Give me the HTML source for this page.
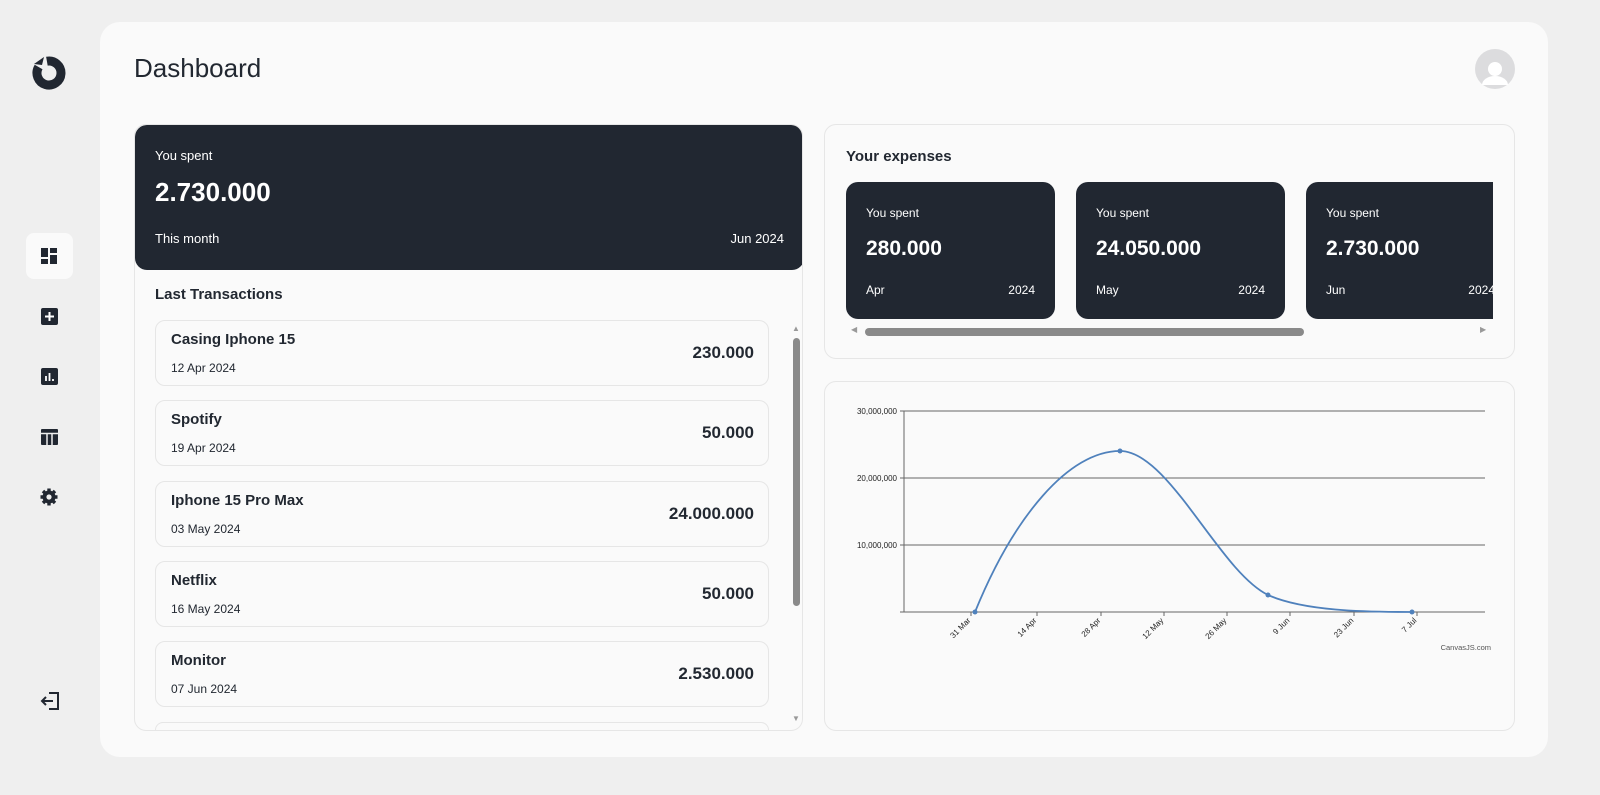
<!DOCTYPE html>
<html><head><style>
*{box-sizing:border-box;margin:0;padding:0}
body{width:1600px;height:795px;background:#efefef;font-family:"Liberation Sans",sans-serif;color:#222831;position:relative;overflow:hidden}
.abs{position:absolute}
.main{left:100px;top:22px;width:1448px;height:735px;background:#fafafa;border-radius:20px}
.card{border:1px solid #e6e6e6;border-radius:12px;background:#fafafa}
.dark{background:#212731;color:#fff}
.item{left:155px;width:614px;height:66px;border:1px solid #e6e6e6;border-radius:10px;background:#fafafa}
.item .n{position:absolute;left:15px;top:10px;font-size:15px;font-weight:bold}
.item .d{position:absolute;left:15px;top:40px;font-size:12px}
.item .v{position:absolute;right:14px;top:22px;font-size:17px;font-weight:bold}
.mini{top:182px;width:209px;height:137px;border-radius:12px;background:#212731;color:#fff}
.mini .a{position:absolute;left:20px;top:24px;font-size:12px}
.mini .b{position:absolute;left:20px;top:55px;font-size:21px;font-weight:bold}
.mini .c{position:absolute;left:20px;top:101px;font-size:12px}
.mini .e{position:absolute;right:20px;top:101px;font-size:12px}
</style></head><body>
<svg class="abs" style="left:31px;top:55px" width="36" height="36" viewBox="0 0 36 36"><path d="M15.9 6.2A12 12 0 1 1 7.6 12" fill="none" stroke="#212731" stroke-width="9"/><path d="M3 9L13 2 11 10z" fill="#212731"/></svg>
<div class="abs" style="left:26px;top:233px;width:47px;height:46px;background:#fafafa;border-radius:8px"></div>
<svg class="abs" style="left:41px;top:248px" width="16" height="16"><rect x="0" y="0" width="7" height="9" fill="#212731"/><rect x="9" y="0" width="7" height="5" fill="#212731"/><rect x="0" y="11" width="7" height="5" fill="#212731"/><rect x="9" y="7" width="7" height="9" fill="#212731"/></svg>
<svg class="abs" style="left:41px;top:308px" width="17" height="17"><rect width="17" height="17" rx="2" fill="#212731"/><path d="M8.5 4v9M4 8.5h9" stroke="#fff" stroke-width="2"/></svg>
<svg class="abs" style="left:41px;top:368px" width="17" height="17"><rect width="17" height="17" rx="2" fill="#212731"/><path d="M5 13V8M8.5 13V5M12 13v-2" stroke="#fff" stroke-width="1.8"/></svg>
<svg class="abs" style="left:41px;top:429px" width="17" height="16"><rect width="17" height="16" rx="1" fill="#212731"/><path d="M0 4.5h17M6 5v11M11 5v11" stroke="#efefef" stroke-width="1.5"/></svg>
<svg class="abs" style="left:40px;top:488px" width="18" height="18" viewBox="0 0 18 18"><g fill="#212731"><circle cx="9" cy="9" r="6.5"/><g stroke="#212731" stroke-width="3.4"><path d="M9 0.5v17M0.5 9h17M3 3l12 12M15 3L3 15"/></g></g><circle cx="9" cy="9" r="2.6" fill="#efefef"/></svg>
<svg class="abs" style="left:40px;top:692px" width="20" height="18" viewBox="0 0 20 18"><path d="M9 1h9v16H9" fill="none" stroke="#212731" stroke-width="2"/><path d="M13 9H2M6 5L2 9l4 4" fill="none" stroke="#212731" stroke-width="2"/></svg>

<div class="abs main"></div>
<div class="abs" style="left:134px;top:53px;font-size:26px;color:#222831">Dashboard</div>
<svg class="abs" style="left:1475px;top:49px" width="40" height="40"><circle cx="20" cy="20" r="20" fill="#dcdcde"/><circle cx="20" cy="20" r="7" fill="#fff"/><path d="M7 36a13 9 0 0 1 26 0z" fill="#fff"/></svg>

<div class="abs card" style="left:134px;top:124px;width:669px;height:607px;overflow:hidden">
 <div class="abs dark" style="left:0;top:0;width:669px;height:145px;border-radius:12px">
  <div class="abs" style="left:20px;top:23px;font-size:13px">You spent</div>
  <div class="abs" style="left:20px;top:52px;font-size:26px;font-weight:bold">2.730.000</div>
  <div class="abs" style="left:20px;top:106px;font-size:13px">This month</div>
  <div class="abs" style="right:20px;top:106px;font-size:13px">Jun 2024</div>
 </div>
 <div class="abs" style="left:20px;top:161px;font-size:15px;font-weight:bold">Last Transactions</div>
 <div class="abs" style="left:658px;top:213px;width:7px;height:268px;background:#8a8a8a;border-radius:4px"></div>
 <div class="abs" style="left:657px;top:199px;font-size:8px;color:#999">▲</div>
 <div class="abs" style="left:657px;top:589px;font-size:8px;color:#999">▼</div>
</div>
<div class="abs item" style="top:320px"><div class="n">Casing Iphone 15</div><div class="d">12 Apr 2024</div><div class="v">230.000</div></div>
<div class="abs item" style="top:400px"><div class="n">Spotify</div><div class="d">19 Apr 2024</div><div class="v">50.000</div></div>
<div class="abs item" style="top:481px"><div class="n">Iphone 15 Pro Max</div><div class="d">03 May 2024</div><div class="v">24.000.000</div></div>
<div class="abs item" style="top:561px"><div class="n">Netflix</div><div class="d">16 May 2024</div><div class="v">50.000</div></div>
<div class="abs item" style="top:641px"><div class="n">Monitor</div><div class="d">07 Jun 2024</div><div class="v">2.530.000</div></div>
<div class="abs item" style="top:722px;height:8px;border-bottom:none;border-radius:10px 10px 0 0"></div>

<div class="abs card" style="left:824px;top:124px;width:691px;height:235px"></div>
<div class="abs" style="left:846px;top:148px;font-size:15px;font-weight:bold">Your expenses</div>
<div class="abs" style="left:846px;top:182px;width:647px;height:137px;overflow:hidden">
 <div class="abs mini" style="left:0;top:0"><div class="a">You spent</div><div class="b">280.000</div><div class="c">Apr</div><div class="e">2024</div></div>
 <div class="abs mini" style="left:230px;top:0"><div class="a">You spent</div><div class="b">24.050.000</div><div class="c">May</div><div class="e">2024</div></div>
 <div class="abs mini" style="left:460px;top:0"><div class="a">You spent</div><div class="b">2.730.000</div><div class="c">Jun</div><div class="e">2024</div></div>
</div>
<div class="abs" style="left:865px;top:328px;width:439px;height:8px;background:#8a8a8a;border-radius:4px"></div>
<div class="abs" style="left:851px;top:325px;font-size:8px;color:#999">◀</div>
<div class="abs" style="left:1480px;top:325px;font-size:8px;color:#999">▶</div>

<div class="abs card" style="left:824px;top:381px;width:691px;height:350px"></div>
<svg class="abs" style="left:824px;top:381px" width="691" height="350" font-family="Liberation Sans" font-size="8" fill="#222">
 <g stroke="#666" stroke-width="1"><path d="M80 30H661M80 97H661M80 164H661M80 231H661M80 30V231"/></g>
 <g stroke="#666"><path d="M76 30h4M76 97h4M76 164h4M76 231h4M147 231v4M213 231v4M277 231v4M340 231v4M403 231v4M466 231v4M530 231v4M593 231v4"/></g>
 <text x="73" y="33" text-anchor="end">30,000,000</text>
 <text x="73" y="100" text-anchor="end">20,000,000</text>
 <text x="73" y="167" text-anchor="end">10,000,000</text>
 <g text-anchor="end">
 <text transform="translate(147,240) rotate(-45)">31 Mar</text>
 <text transform="translate(213,240) rotate(-45)">14 Apr</text>
 <text transform="translate(277,240) rotate(-45)">28 Apr</text>
 <text transform="translate(340,240) rotate(-45)">12 May</text>
 <text transform="translate(403,240) rotate(-45)">26 May</text>
 <text transform="translate(466,240) rotate(-45)">9 Jun</text>
 <text transform="translate(530,240) rotate(-45)">23 Jun</text>
 <text transform="translate(593,240) rotate(-45)">7 Jul</text>
 </g>
 <text x="667" y="269" text-anchor="end" font-size="7.5" fill="#555">CanvasJS.com</text>
 <path d="M151 231C190 135 245 70 296 70C345 70 395 190 444 214C480 230 540 231 588 231" fill="none" stroke="#4f81bc" stroke-width="1.8"/>
 <g fill="#4f81bc"><circle cx="151" cy="231" r="2.5"/><circle cx="296" cy="70" r="2.5"/><circle cx="444" cy="214" r="2.5"/><circle cx="588" cy="231" r="2.5"/></g>
</svg>
</body></html>
